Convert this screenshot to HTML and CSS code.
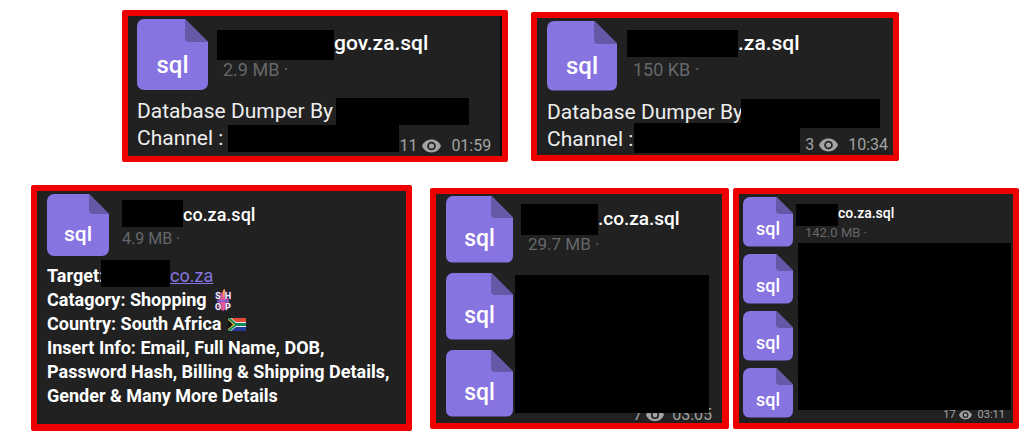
FILE: index.html
```html
<!DOCTYPE html>
<html lang="en">
  <head>
    <meta charset="UTF-8" />
    <meta name="viewport" content="width=device-width, initial-scale=1.0" />
    <title>SQL files</title>
    <link rel="stylesheet" href="styles.css">
  </head>
  <body>
    <svg class="defs" width="0" height="0" aria-hidden="true">
      <symbol id="eye" viewBox="1 4 22 16">
        <path d="M12 4.5C7 4.5 2.7 7.6 1 12c1.700 4.400 6 7.500 11 7.500s9.300-3.100 11-7.500c-1.700-4.400-6-7.500-11-7.500zM12 17a5 5 0 1 1 0-10 5 5 0 0 1 0 10zm0-8a3 3 0 1 0 0 6 3 3 0 0 0 0-6z" />
      </symbol>
    </svg>

    <main>
      <div class="row row-top">
        <article class="card card-gov">
          <div class="file">
            <div class="icon">sql</div>
            <div class="info">
              <div class="name"><span class="redact"></span>gov.za.sql</div>
              <div class="size">2.9 MB ·</div>
            </div>
          </div>
          <div class="text">
            <div class="line">Database Dumper By <span class="redact by"></span></div>
            <div class="line">
              Channel : <span class="redact channel"></span>
              <div class="meta">11 <svg class="eye"><use href="#eye" /></svg> <time>01:59</time></div>
            </div>
          </div>
        </article>

        <article class="card card-za">
          <div class="file">
            <div class="icon">sql</div>
            <div class="info">
              <div class="name"><span class="redact"></span>.za.sql</div>
              <div class="size">150 KB ·</div>
            </div>
          </div>
          <div class="text">
            <div class="line">Database Dumper By <span class="redact by"></span></div>
            <div class="line">
              Channel : <span class="redact channel"></span>
              <div class="meta">3 <svg class="eye"><use href="#eye" /></svg> <time>10:34</time></div>
            </div>
          </div>
        </article>
      </div>

      <div class="row row-bottom">
        <article class="card card-shop">
          <div class="file">
            <div class="icon">sql</div>
            <div class="info">
              <div class="name"><span class="redact"></span>co.za.sql</div>
              <div class="size">4.9 MB ·</div>
            </div>
          </div>
          <div class="text">
            <div class="line">Target:<span class="redact target"></span><a href="#">co.za</a></div>
            <div class="line">
              Catagory: Shopping
              <svg class="emoji" viewBox="0 0 18 22">
                <path fill="#e8559a" d="M5 7l5-6 2 1v5l3 4v6l-6 5-5-4z" />
                <path fill="#f6a04d" d="M9 1l2-1v7l-2 1z" />
                <path fill="#7d5bd0" d="M3 11h12v2H3z" />
                <text x="4" y="10" text-anchor="middle">S</text>
                <text x="14" y="10" text-anchor="middle">H</text>
                <text x="4" y="21" text-anchor="middle">O</text>
                <text x="14" y="21" text-anchor="middle">P</text>
              </svg>
            </div>
            <div class="line">
              Country: South Africa
              <svg class="emoji flag" viewBox="0 0 18 13">
                <path fill="#e8eee9" d="M0 0h18v13H0z" />
                <path fill="#e34a38" d="M3 0h15v4H8z" />
                <path fill="#24389c" d="M3 13h15V9H8z" />
                <path fill="#138a5c" d="M0 0h2l6 5h10v3H8l-6 5H0z" />
                <path fill="#f2b632" d="M0 1l7 5.500L0 12z" />
                <path fill="#10130f" d="M0 2l5 4.500L0 11z" />
              </svg>
            </div>
            <div>Insert Info: Email, Full Name, DOB, Password Hash, Billing &amp; Shipping Details, Gender &amp; Many More Details</div>
          </div>
        </article>

        <div class="pair">
          <article class="card album card-three">
            <div class="icons">
              <div class="icon">sql</div>
              <div class="icon">sql</div>
              <div class="icon">sql</div>
            </div>
            <div class="info">
              <div class="name"><span class="redact"></span>.co.za.sql</div>
              <div class="size">29.7 MB ·</div>
              <div class="redact rest"></div>
              <div class="meta">7 <svg class="eye"><use href="#eye" /></svg> <time>03:05</time></div>
            </div>
          </article>

          <article class="card album card-four">
            <div class="icons">
              <div class="icon">sql</div>
              <div class="icon">sql</div>
              <div class="icon">sql</div>
              <div class="icon">sql</div>
            </div>
            <div class="info">
              <div class="name"><span class="redact"></span>co.za.sql</div>
              <div class="size">142.0 MB ·</div>
              <div class="redact rest"></div>
              <div class="meta">17 <svg class="eye"><use href="#eye" /></svg> <time>03:11</time></div>
            </div>
          </article>
        </div>
      </div>
    </main>
  </body>
</html>
```
FILE: styles.css
```css
* {
  box-sizing: border-box;
}
body {
  margin: 0;
  background-color: #fff;
  font-family: Roboto, sans-serif;
  color: #fff;
}
.defs {
  position: absolute;
}
main {
  display: flex;
  flex-direction: column;
  gap: 23px;
  padding-top: 10px;
}
.row {
  display: grid;
  align-items: center;
}
.row-top {
  grid-template-columns: 386fr 368fr;
  gap: 23px;
  padding: 0 137px 0 122px;
}
.row-bottom {
  grid-template-columns: 381fr 589fr;
  gap: 18px;
  padding: 0 17px 0 31px;
}
.pair {
  display: grid;
  grid-template-columns: 299fr 286fr;
  gap: 4px;
}
.card {
  background-color: #212121;
  border: 6px solid #ee0000;
  border-radius: 2px;
  min-width: 0;
}
.file {
  display: flex;
}
/* file tile with a folded top right corner */
.icon {
  display: flex;
  align-items: center;
  justify-content: center;
  position: relative;
  flex-shrink: 0;
  width: var(--icon);
  height: var(--icon);
  padding-top: var(--drop);
  border-radius: 7px;
  background-color: #8774e1;
  clip-path: polygon(0 0, calc(100% - var(--fold)) 0, 100% var(--fold), 100% 100%, 0 100%);
  font-size: var(--label);
  font-weight: 500;
  line-height: 1;
}
.icon::before {
  content: "";
  position: absolute;
  top: 0;
  right: 0;
  width: var(--fold);
  height: var(--fold);
  border-bottom-left-radius: 4px;
  background-color: #6658a6;
}
.info {
  min-width: 0;
}
.name {
  display: flex;
  font-weight: 500;
  white-space: nowrap;
}
.size {
  color: #65686b;
  white-space: nowrap;
}
.redact {
  background-color: #000;
  flex-shrink: 0;
}
.line {
  display: flex;
  white-space: nowrap;
}
.meta {
  display: flex;
  align-items: center;
  margin-left: auto;
  color: #a3a3a3;
}
.eye {
  fill: #a3a3a3;
}
a {
  color: #8774e1;
  font-weight: 400;
  text-decoration: underline;
}

/* top row */
.card-gov,
.card-za {
  --icon: 70px;
  --fold: 23px;
  --drop: 20px;
  --label: 24px;
}
.card-gov {
  --icon: 71px;
  padding: 3px 11px 4px 9px;
  box-shadow: inset -2px 0 #0c0a10;
}
.card-za {
  padding: 3px 5px 2px 10px;
}
.row-top .info {
  padding: 11px 0 0 9px;
}
.card-za .info {
  padding: 9px 0 0 10px;
}
.row-top .name {
  font-size: 21px;
  line-height: 26px;
}
.row-top .name .redact {
  width: 117px;
  height: 30px;
}
.card-za .name .redact {
  width: 111px;
  height: 27px;
  margin-bottom: 3px;
}
.row-top .size {
  padding-left: 6px;
  font-size: 18px;
  line-height: 20px;
}
.row-top .text {
  margin-top: 8px;
  font-size: 21px;
  line-height: 27px;
  color: #eee;
}
.by {
  width: 133px;
  height: 27px;
  margin-left: 3px;
}
.channel {
  width: 171px;
  height: 27px;
  margin-left: 5px;
}
.card-za .by {
  width: 139px;
  height: 29px;
  margin: 0 0 -2px -2px;
}
.card-za .channel {
  width: 166px;
  height: 30px;
  margin: -3px 0 0 1px;
}
.row-top .meta {
  align-self: flex-end;
  gap: 5px;
  font-size: 16px;
  line-height: 16px;
}
.card-gov .meta {
  margin: 0 4px -2px auto;
}
.row-top .eye {
  width: 19px;
  height: 14px;
}
.row-top time {
  margin-left: 5px;
}

/* shop card */
.card-shop {
  --icon: 62px;
  --fold: 20px;
  --drop: 18px;
  --label: 21px;
  padding: 3px 9px 16px 10px;
  border-bottom-width: 7px;
}
.card-shop .info {
  padding: 6px 0 0 13px;
}
.card-shop .name {
  font-size: 18px;
  line-height: 30px;
}
.card-shop .name .redact {
  width: 61px;
  height: 27px;
}
.card-shop .size {
  font-size: 16px;
  line-height: 18px;
}
.card-shop .text {
  margin-top: 8px;
  font-size: 18px;
  font-weight: 700;
  line-height: 24px;
}
.target {
  width: 69px;
  height: 27px;
  margin: -4px 0 0 -3px;
}
.emoji {
  align-self: center;
  width: 18px;
  height: 22px;
  margin-left: 7px;
  overflow: visible;
}
.emoji text {
  fill: #f4f0fa;
  stroke: #4b3a78;
  stroke-width: 1px;
  paint-order: stroke;
  font-size: 9px;
  font-weight: 700;
}
.flag {
  height: 13px;
}

/* albums */
.album {
  display: flex;
}
.icons {
  display: flex;
  flex-direction: column;
  flex-shrink: 0;
}
.album .info {
  display: flex;
  flex-direction: column;
  flex: 1;
}
.rest {
  flex: 1;
  position: relative;
}
.card-three {
  --icon: 67px;
  --fold: 22px;
  --drop: 19px;
  --label: 23px;
  padding: 2px 10px 6px 10px;
  border-right-width: 7px;
}
.card-three .icons {
  gap: 10px;
}
.card-three .name {
  margin: 8px 0 0 8px;
  font-size: 19px;
  line-height: 30px;
}
.card-three .name .redact {
  width: 77px;
  height: 31px;
}
.card-three .size {
  padding-left: 15px;
  font-size: 17px;
  line-height: 18px;
}
.card-three .rest {
  margin: 22px 3px 0 2px;
}
.card-three .meta {
  gap: 4px;
  margin: -5px 0 -5px auto;
  font-size: 16px;
  line-height: 14px;
}
.card-three .eye {
  width: 18px;
  height: 14px;
}
.card-three time {
  margin-left: 4px;
}
.card-four {
  --icon: 50px;
  --fold: 17px;
  --drop: 14px;
  --label: 18px;
  padding: 3px 2px 5px 4px;
}
.card-four .icons {
  gap: 7px;
}
.card-four .name {
  margin: 7px 0 0 3px;
  font-size: 14px;
  line-height: 18px;
}
.card-four .name .redact {
  width: 42px;
  height: 22px;
}
.card-four .size {
  padding-left: 12px;
  font-size: 13px;
  line-height: 14px;
}
.card-four .rest {
  margin: 3px 0 0 5px;
}
.card-four .meta {
  gap: 3px;
  margin: 0 6px -2px auto;
  font-size: 11px;
  line-height: 10px;
}
.card-four .eye {
  width: 13px;
  height: 10px;
}
.card-four time {
  margin-left: 3px;
}
```
